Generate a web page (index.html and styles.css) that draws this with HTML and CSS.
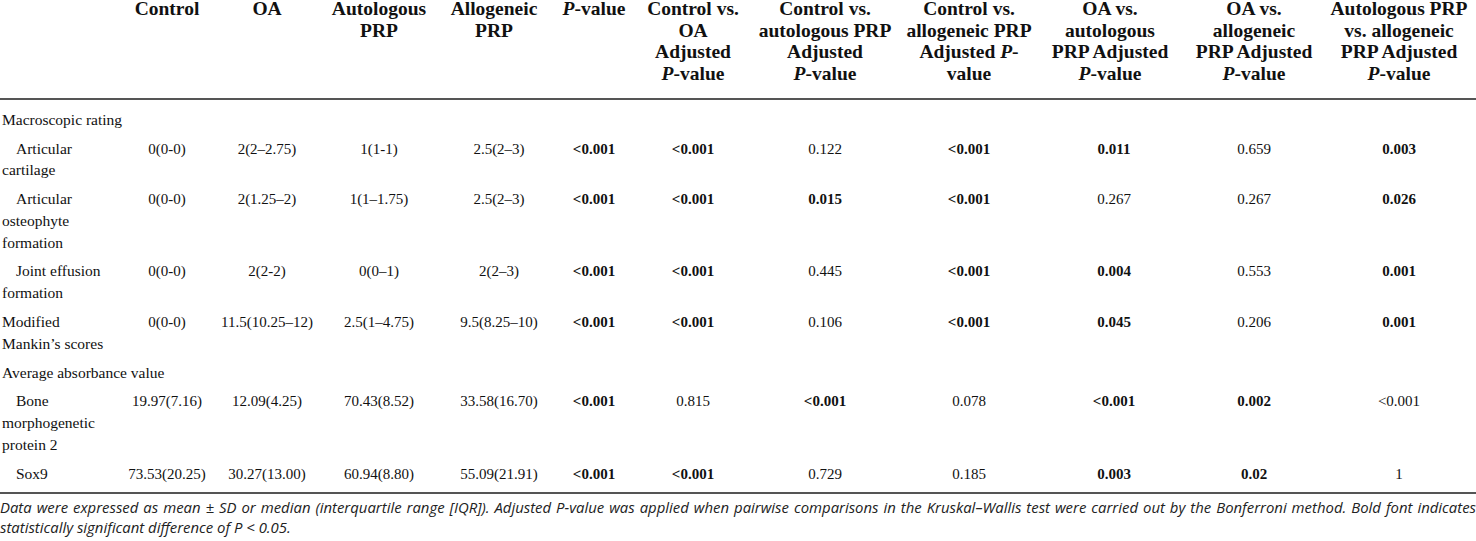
FILE: index.html
```html
<!DOCTYPE html>
<html lang="en">
<head>
<meta charset="utf-8">
<title>Table</title>
<link rel="stylesheet" href="styles.css">
</head>
<body>
<div class="wrap">
<table class="data">
<colgroup>
<col class="c-lbl"><col class="c-ctl"><col class="c-oa"><col class="c-auto"><col class="c-allo"><col class="c-p"><col class="c-cvoa"><col class="c-cvauto"><col class="c-cvallo"><col class="c-oavauto"><col class="c-oavallo"><col class="c-avallo">
</colgroup>
<thead>
<tr>
<th></th>
<th>Control</th>
<th>OA</th>
<th>Autologous<br>PRP</th>
<th>Allogeneic<br>PRP</th>
<th><i>P</i>-value</th>
<th>Control vs.<br>OA<br>Adjusted<br><i>P</i>-value</th>
<th>Control vs.<br>autologous PRP<br>Adjusted<br><i>P</i>-value</th>
<th>Control vs.<br>allogeneic PRP<br>Adjusted <i>P</i>-<br>value</th>
<th>OA vs.<br>autologous<br>PRP Adjusted<br><i>P</i>-value</th>
<th>OA vs.<br>allogeneic<br>PRP Adjusted<br><i>P</i>-value</th>
<th>Autologous PRP<br>vs. allogeneic<br>PRP Adjusted<br><i>P</i>-value</th>
</tr>
</thead>
<tbody>
<tr class="sec first"><td class="lbl" colspan="12">Macroscopic rating</td></tr>
<tr>
<td class="lbl sub">Articular cartilage</td>
<td>0(0-0)</td><td>2(2–2.75)</td><td>1(1-1)</td><td>2.5(2–3)</td>
<td><b>&lt;0.001</b></td><td><b>&lt;0.001</b></td><td>0.122</td><td><b>&lt;0.001</b></td><td><b>0.011</b></td><td>0.659</td><td><b>0.003</b></td>
</tr>
<tr>
<td class="lbl sub">Articular osteophyte formation</td>
<td>0(0-0)</td><td>2(1.25–2)</td><td>1(1–1.75)</td><td>2.5(2–3)</td>
<td><b>&lt;0.001</b></td><td><b>&lt;0.001</b></td><td><b>0.015</b></td><td><b>&lt;0.001</b></td><td>0.267</td><td>0.267</td><td><b>0.026</b></td>
</tr>
<tr>
<td class="lbl sub">Joint effusion formation</td>
<td>0(0-0)</td><td>2(2-2)</td><td>0(0–1)</td><td>2(2–3)</td>
<td><b>&lt;0.001</b></td><td><b>&lt;0.001</b></td><td>0.445</td><td><b>&lt;0.001</b></td><td><b>0.004</b></td><td>0.553</td><td><b>0.001</b></td>
</tr>
<tr>
<td class="lbl">Modified Mankin’s scores</td>
<td>0(0-0)</td><td>11.5(10.25–12)</td><td>2.5(1–4.75)</td><td>9.5(8.25–10)</td>
<td><b>&lt;0.001</b></td><td><b>&lt;0.001</b></td><td>0.106</td><td><b>&lt;0.001</b></td><td><b>0.045</b></td><td>0.206</td><td><b>0.001</b></td>
</tr>
<tr class="sec"><td class="lbl" colspan="12">Average absorbance value</td></tr>
<tr>
<td class="lbl sub">Bone morphogenetic protein 2</td>
<td>19.97(7.16)</td><td>12.09(4.25)</td><td>70.43(8.52)</td><td>33.58(16.70)</td>
<td><b>&lt;0.001</b></td><td>0.815</td><td><b>&lt;0.001</b></td><td>0.078</td><td><b>&lt;0.001</b></td><td><b>0.002</b></td><td>&lt;0.001</td>
</tr>
<tr class="last">
<td class="lbl sub">Sox9</td>
<td>73.53(20.25)</td><td>30.27(13.00)</td><td>60.94(8.80)</td><td>55.09(21.91)</td>
<td><b>&lt;0.001</b></td><td><b>&lt;0.001</b></td><td>0.729</td><td>0.185</td><td><b>0.003</b></td><td><b>0.02</b></td><td>1</td>
</tr>
</tbody>
</table>
<p class="note">Data were expressed as mean ± SD or median (interquartile range [IQR]). Adjusted P-value was applied when pairwise comparisons in the Kruskal–Wallis test were carried out by the Bonferroni method. Bold font indicates statistically significant difference of P &lt; 0.05.</p>
</div>
</body>
</html>
```

FILE: styles.css
```css
html, body {
  margin: 0;
  padding: 0;
  background: #fff;
}

.wrap {
  width: 1476px;
}

.data {
  width: 1476px;
  table-layout: fixed;
  border-collapse: collapse;
  margin-top: -2px;
  color: #111;
  font-family: "Liberation Serif", "Times New Roman", serif;
}

.c-lbl { width: 118px; }
.c-ctl { width: 98px; }
.c-oa { width: 102px; }
.c-auto { width: 122px; }
.c-allo { width: 108px; }
.c-p { width: 92px; }
.c-cvoa { width: 106px; }
.c-cvauto { width: 158px; }
.c-cvallo { width: 130px; }
.c-oavauto { width: 152px; }
.c-oavallo { width: 136px; }
.c-avallo { width: 154px; }

.data th {
  font-weight: bold;
  font-size: 19.5px;
  line-height: 21.7px;
  text-align: center;
  vertical-align: top;
  white-space: nowrap;
  padding: 0 0 13px 0;
  border-bottom: 2px solid #555;
}

.data td {
  font-size: 15px;
  line-height: 21.7px;
  text-align: center;
  vertical-align: baseline;
  padding: 3.6px 0;
}

.data td:nth-child(5) { padding-left: 10px; }
.data td:nth-child(10) { padding-left: 8px; }

.data td.lbl {
  font-size: 15.5px;
  text-align: left;
  padding-left: 2px;
  padding-right: 0;
}

.data td.sub {
  text-indent: 14px;
}

.data tr.first td {
  padding-top: 8.8px;
}

.data tr.last td {
  padding-bottom: 6.5px;
  border-bottom: 2px solid #555;
}

.note {
  margin: 4px 0 0 0;
  font-family: "Open Sans", "Noto Sans", sans-serif;
  font-style: italic;
  font-size: 14.9px;
  line-height: 19.6px;
  color: #222;
  text-align: justify;
}
```
